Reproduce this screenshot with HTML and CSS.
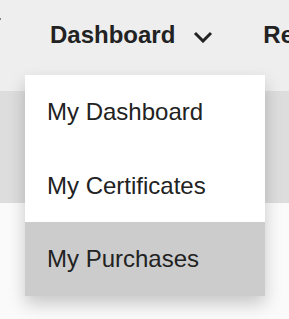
FILE: index.html
```html
<!DOCTYPE html>
<html lang="en">

<head>
    <meta charset="UTF-8">
    <meta name="viewport" content="width=device-width, initial-scale=1.0">
    <title>Dashboard</title>
    <link rel="stylesheet" href="styles.css">
</head>
<body>
    <nav class="topnav">
        <div class="nav-item prev">
            <svg class="chevron" width="20" height="12" viewBox="0 0 20 12">
                <polyline points="2,2 10,10 18,2" />
            </svg>
        </div>
        <div class="nav-item dropdown">
            <span>Dashboard</span>
            <svg class="chevron" width="20" height="12" viewBox="0 0 20 12">
                <polyline points="2,2 10,10 18,2" />
            </svg>
            <div class="dropdown-menu">
                <a href="#">My Dashboard</a>
                <a href="#">My Certificates</a>
                <a href="#" class="active">My Purchases</a>
            </div>
        </div>
        <div class="nav-item">
            <span>Resources</span>
        </div>
    </nav>
    <div class="band"></div>
    <div class="page"></div>
</body>
</html>
```

FILE: styles.css
```css
body {
    font-family: 'Liberation Sans', Arial, sans-serif;
    margin: 0;
    padding: 0;
    background-color: #fafafa;
    overflow: hidden;
}

.topnav {
    display: flex;
    height: 91px;
    background-color: #eeeeee;
    white-space: nowrap;
}

.nav-item {
    position: relative;
    display: flex;
    flex-shrink: 0;
    align-items: flex-start;
    box-sizing: border-box;
    height: 91px;
    padding: 21px 25px 0;
    font-size: 24px;
    line-height: 1.15;
    font-weight: bold;
    color: #222;
}

.prev {
    width: 25px;
    padding: 0;
}

.prev .chevron {
    margin: 16px 0 0 -18px;
}

.chevron {
    fill: none;
    stroke: #222;
    stroke-width: 3;
    margin: 10px 0 0 18px;
}

.dropdown-menu {
    position: absolute;
    top: 75px;
    left: 0;
    width: 240px;
    background-color: #ffffff;
    box-shadow: 0 8px 16px rgba(0, 0, 0, 0.2);
    z-index: 2;
}

.dropdown-menu a {
    display: block;
    padding: 23px 22px;
    font-size: 24px;
    line-height: 1.15;
    font-weight: normal;
    color: #222;
    text-decoration: none;
}

.dropdown-menu a.active {
    background-color: #cccccc;
}

.band {
    height: 112px;
    background-color: #dddddd;
}

.page {
    height: 116px;
}
```
